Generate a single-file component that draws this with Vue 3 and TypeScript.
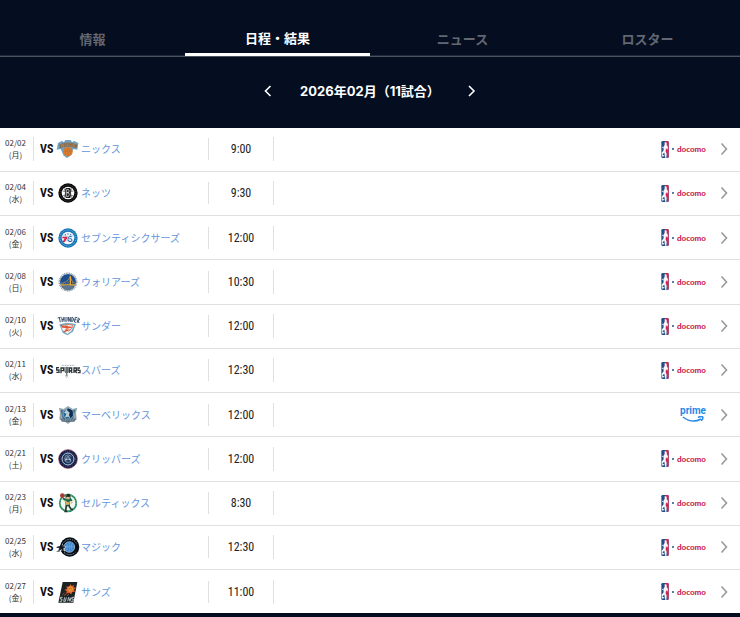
<script setup lang="ts">
import { ref } from 'vue'

type Team =
  | 'knicks' | 'nets' | 'sixers' | 'warriors' | 'thunder' | 'spurs'
  | 'mavericks' | 'clippers' | 'celtics' | 'magic' | 'suns'

interface Game {
  date: string
  day: string
  team: Team
  name: string
  time: string
  channel: 'docomo' | 'prime'
}

const tabs: string[] = ['情報', '日程・結果', 'ニュース', 'ロスター']
const activeTab = ref<string>('日程・結果')

const games: Game[] = [
  { date: '02/02', day: '月', team: 'knicks', name: 'ニックス', time: '9:00', channel: 'docomo' },
  { date: '02/04', day: '水', team: 'nets', name: 'ネッツ', time: '9:30', channel: 'docomo' },
  { date: '02/06', day: '金', team: 'sixers', name: 'セブンティシクサーズ', time: '12:00', channel: 'docomo' },
  { date: '02/08', day: '日', team: 'warriors', name: 'ウォリアーズ', time: '10:30', channel: 'docomo' },
  { date: '02/10', day: '火', team: 'thunder', name: 'サンダー', time: '12:00', channel: 'docomo' },
  { date: '02/11', day: '水', team: 'spurs', name: 'スパーズ', time: '12:30', channel: 'docomo' },
  { date: '02/13', day: '金', team: 'mavericks', name: 'マーベリックス', time: '12:00', channel: 'prime' },
  { date: '02/21', day: '土', team: 'clippers', name: 'クリッパーズ', time: '12:00', channel: 'docomo' },
  { date: '02/23', day: '月', team: 'celtics', name: 'セルティックス', time: '8:30', channel: 'docomo' },
  { date: '02/25', day: '水', team: 'magic', name: 'マジック', time: '12:30', channel: 'docomo' },
  { date: '02/27', day: '金', team: 'suns', name: 'サンズ', time: '11:00', channel: 'docomo' },
]
</script>

<template>
  <main class="page">
    <nav class="tabs">
      <a
        v-for="tab in tabs"
        :key="tab"
        href="#"
        class="tab"
        :class="{ active: tab === activeTab }"
        @click.prevent="activeTab = tab"
      >{{ tab }}</a>
    </nav>

    <header class="month">
      <button type="button" class="arrow">
        <svg viewBox="0 0 10 14" width="10" height="14"><path d="M7.500 2 2.500 7 7.500 12" /></svg>
      </button>
      <h1>2026年02月（11試合）</h1>
      <button type="button" class="arrow">
        <svg viewBox="0 0 10 14" width="10" height="14"><path d="M2 2 7 7 2 12" /></svg>
      </button>
    </header>

    <table class="games">
      <tbody>
        <tr v-for="game in games" :key="game.date">
          <td class="date-cell">
            <div class="date"><span>{{ game.date }}</span><span>({{ game.day }})</span></div>
          </td>
          <td class="team-cell">
            <div class="opponent">
              <b class="vs">VS</b>
              <svg class="logo" viewBox="0 0 78 66" width="26" height="22">
                <g v-if="game.team === 'knicks'">
                  <path d="M9 15 20 9l7 3 4-6h16l4 6 7-3 12 6-3 20-12-2-9 20-10 7-10-7-9-20-12 2z" fill="#6fa3c4" />
                  <path d="M11 20q28-13 56 0l-3 11q-25-11-50 0z" fill="#85694d" />
                  <path d="M14 20v9m6-11v10m0-10 6 9m0-11v10m6-11v10m5-10v10m9-10-5 5 6 6m4-10v10m10-8-7 1 5 6-6 2" stroke="#b98a5d" stroke-width="2" fill="none" />
                  <circle cx="39" cy="41" r="14" fill="#dd7b2c" />
                  <path d="M25 41q14-5 28 0M39 27v28M29 31q9 10 0 20m20-20q-9 10 0 20" stroke="#b56a30" stroke-width="1.500" fill="none" />
                </g>
                <g v-else-if="game.team === 'nets'">
                  <circle cx="39" cy="33" r="29" fill="#080808" />
                  <circle cx="39" cy="33" r="24" fill="none" stroke="#666" stroke-width="2" stroke-dasharray="3 3" />
                  <circle cx="39" cy="33" r="19" fill="#fff" />
                  <path d="M22 27q13 4 34 0M23 41q14-5 32 0M28 19q7 13 0 28m22-28q-7 13 0 28" stroke="#555" stroke-width="2" fill="none" />
                  <rect x="31" y="18" width="16" height="30" rx="4" fill="#111" />
                  <path d="M35 22h5q5 5 0 10h-5zm0 10h6q4 6-1 12h-5z" fill="none" stroke="#fff" stroke-width="2" />
                </g>
                <g v-else-if="game.team === 'sixers'">
                  <circle cx="39" cy="33" r="29" fill="#1675b8" />
                  <circle cx="39" cy="33" r="24" fill="none" stroke="#7fb6d8" stroke-width="3" stroke-dasharray="3 3" />
                  <circle cx="39" cy="33" r="19" fill="#f3f7fb" />
                  <path d="M22 26q18 5 34 0M25 44q15-7 28 0" stroke="#8fbfe0" stroke-width="2" fill="none" />
                  <path d="M22 29h15v5L28 46h-6l7-12h-7z" fill="#dc274c" />
                  <path d="M50 29h-7q-4 2-4 9 0 6 6 6t6-5-8-4" fill="none" stroke="#2464ac" stroke-width="3" />
                  <path d="m30 21 2 4m7-6v4m9-2-2 4" stroke="#2464ac" stroke-width="3" />
                </g>
                <g v-else-if="game.team === 'warriors'">
                  <circle cx="39" cy="33" r="24" fill="#1d4d8d" />
                  <circle cx="39" cy="33" r="26" fill="none" stroke="#8b9ba9" stroke-width="5" stroke-dasharray="3 2" />
                  <path d="M18 37q18-1 28-20 4 18 13 19" fill="none" stroke="#d9a53f" stroke-width="2" />
                  <path d="M17 42h44M46 15v36" stroke="#e7aa36" stroke-width="4" />
                  <path d="M25 37v8m7-10v10m7-15v15m14-13v13" stroke="#b08d4a" stroke-width="2" />
                  <path d="M20 47q19-8 38 0-9 11-19 11T20 47z" fill="#5c7690" />
                </g>
                <g v-else-if="game.team === 'thunder'">
                  <path d="M13 28 36 23l27 4-9 23-17 11-14-8z" fill="#78a9c2" />
                  <path d="m19 30 38 1-8 17-12 9-15-13z" fill="#f1f4f7" />
                  <path d="m16 29 40 8-24 5 14 2-21 9 9-13-12-2z" fill="#df563e" />
                  <path d="M25 37q14-14 28-6-3 14-13 18" fill="none" stroke="#e9794d" stroke-width="3" />
                  <path
                    d="M8 9 17 7M13 8 16 22M20 7 22 21M26 6 27 20M21 14 27 13M30 6V17Q33 22 36 17V6M40 20V6L46 20V6M50 20 51 6Q58 9 55 15 54 20 50 20M67 8 61 7 58 21 64 22M60 14 65 15M67 23 70 9Q76 11 73 15 71 17 69 16L72 24"
                    stroke="#3c526f"
                    stroke-width="3"
                    fill="none"
                  />
                </g>
                <g v-else-if="game.team === 'spurs'" fill="none" stroke="#303739" stroke-width="4">
                  <path d="M12 26H5v7h7v7H4M18 43V27h8v8h-8M43 42V27h7v8h-7m3 0 6 7M57 42V27h7v8h-7m3 0 5 7M75 27h-6v7h6v7h-7" />
                  <path d="M30 24v9q0 8 5 8t4-8v-9M35 23v27" stroke="#657073" />
                  <path d="m31 50 4-3 4 3-4 6z" stroke="#9aa4a6" stroke-width="2" />
                  <path d="M20 19h38" stroke="#9aa3a8" stroke-width="3" stroke-dasharray="3 2" />
                </g>
                <g v-else-if="game.team === 'mavericks'">
                  <path d="m12 11 14 4 13-9 14 9 14-4-4 15 2 20-13 4-13 10-14-10-12-4 2-19z" fill="#93a6b1" />
                  <path d="m17 17 11 3 11-8 11 8 11-3-4 15-3 14-15 9-15-9-4-14z" fill="#3f7090" />
                  <circle cx="40" cy="29" r="16" fill="#1d6497" stroke="#b5c5cd" stroke-width="2" />
                  <path d="M36 14 27 26l7 3-4 11 9-2 6 4-2-18z" fill="#b9cdd8" />
                  <path d="m38 13 15 8v15l-7 6-4-9 3-8-8-4z" fill="#132a49" />
                  <path d="M15 44h49l-6 9H21z" fill="#54697a" />
                  <path d="M20 48h38" stroke="#9fb1bb" stroke-width="3" stroke-dasharray="3 2" />
                </g>
                <g v-else-if="game.team === 'clippers'">
                  <circle cx="39" cy="33" r="28" fill="#101b45" stroke="#7b2945" stroke-width="2" />
                  <circle cx="39" cy="33" r="23" fill="none" stroke="#5f5478" stroke-width="3" stroke-dasharray="3 4" />
                  <circle cx="39" cy="33" r="18" fill="#1d345d" stroke="#b8cbd9" stroke-width="3" />
                  <path d="M49 25q-10-7-17-2-6 9 0 18 8 5 17-1" fill="none" stroke="#9fb4c6" stroke-width="2" />
                  <path d="m29 38 4-9 6-7 6 7 4 9q-10-4-20 0z" fill="#b8cbda" />
                  <path d="M39 22v14m-6-6h12" stroke="#18264c" stroke-width="2" />
                </g>
                <g v-else-if="game.team === 'celtics'">
                  <circle cx="39" cy="33" r="25" fill="#f0f5ee" stroke="#16845a" stroke-width="5" />
                  <circle cx="39" cy="33" r="25" fill="none" stroke="#a9cbb5" stroke-width="2" stroke-dasharray="3 4" />
                  <path d="m31 16 4-5h9l3 6 6 9-8 2v13l-12 3-3-17-8-6 3-4 9 3z" fill="#176b4c" />
                  <path d="M34 14h10v8H34zM30 25l6 4-2 4-7-6zM47 27l7 4-7 6z" fill="#ddb990" />
                  <path d="M31 13h16M36 7h8v5h-8z" stroke="#34382c" stroke-width="3" />
                  <path d="m33 28 6 3 6-3-2 10H33z" fill="#d4b35b" />
                  <path d="m34 40-2 16m9-16 8 13m-21 5h8m12-6h6" stroke="#203a32" stroke-width="5" />
                  <circle cx="22" cy="11" r="7" fill="#b6403a" />
                  <path d="M16 10q7-4 12 2m-7-7v13" stroke="#743729" fill="none" />
                </g>
                <g v-else-if="game.team === 'magic'">
                  <circle cx="44" cy="33" r="29" fill="#050c16" />
                  <path d="M26 20q6-9 18-10 13 0 20 12" fill="none" stroke="#859aa8" stroke-width="3" stroke-dasharray="4 3" />
                  <path d="M27 49q17 14 34 0" fill="none" stroke="#a9b9c6" stroke-width="3" stroke-dasharray="3 3" />
                  <circle cx="43" cy="33" r="16" fill="#3c85cf" stroke="#b9d0e1" stroke-width="2" />
                  <path d="M28 33q15-5 30 0M43 18v31M34 21q9 11 0 23m18-23q-8 12 0 23" stroke="#79acdc" stroke-width="2" fill="none" />
                  <path d="m22 22 4 9 9 1-7 6 3 9-9-5-9 5 2-9-10-4 10-2z" fill="#d5dfe6" />
                  <path d="m20 24 4 8 6 1-6 4 1 7-6-5-8 5 3-9-9-1 10-3zM5 46h9" fill="#111820" stroke="#111820" stroke-width="2" />
                </g>
                <g v-else>
                  <path d="M23 3h44L55 65H10z" fill="#192324" />
                  <path d="m47 9 3 7 7-5-2 8 8 1-6 6 3 6-8 1-3 7-7-5-8 3 1-8-7-3 8-4-2-7 8 1z" fill="#e75e2c" />
                  <circle cx="46" cy="24" r="8" fill="#f1a43c" />
                  <path d="M38 24q8-4 16 0m-8-8v16m-6-14q7 6 0 12m12-12q-7 6 0 12" stroke="#ad4925" fill="none" />
                  <path d="m29 35-8 8m15-6-9 7m15-6-6 7" stroke="#9c4831" stroke-width="3" />
                  <path d="M23 49h-6l-1 5h5l-1 7h-6M29 49l-3 12h5l3-12M38 61l3-12 4 12 3-12M57 49h-6l-1 5h5l-1 7h-6" stroke="#b8c2c4" stroke-width="3" fill="none" />
                </g>
              </svg>
              <a href="#" class="name">{{ game.name }}</a>
            </div>
          </td>
          <td class="time-cell"><div class="time">{{ game.time }}</div></td>
          <td class="channel-cell">
            <div class="channel">
              <span v-if="game.channel === 'docomo'" class="docomo">
                <svg viewBox="0 0 24 51" width="8" height="17">
                  <rect x="1" width="22" height="51" rx="4" fill="#244e87" />
                  <path d="M13 0h6q4 0 4 4v43q0 4-4 4h-1l-3-21-5-9z" fill="#d6244b" />
                  <path d="m11 3 6 2v7l4 7-2 7-4-4-1 9 3 7-1 13h-3l-3-16-5 4 1 8-3-1-1-11 6-7-1-10 4-6z" fill="#f5f8fb" />
                  <path d="M4 44h6" stroke="#dce7f1" stroke-width="4" />
                  <circle cx="5" cy="19" r="2" fill="#e8f0f5" />
                </svg>
                <i class="dot"></i>
                <span>docomo</span>
              </span>
              <span v-else class="prime">
                <span>prime</span>
                <svg viewBox="0 0 24 7" width="24" height="7">
                  <path d="M2 1q9 7 18 2M17 1.500q4-2 5 0 0 2-2 3" fill="none" stroke="#2789e8" stroke-width="1.500" />
                </svg>
              </span>
              <a href="#" class="detail" :aria-label="game.name">
                <svg viewBox="0 0 8 14" width="8" height="14"><path d="m1.500 1.500 5 5.500-5 5.500" /></svg>
              </a>
            </div>
          </td>
        </tr>
      </tbody>
    </table>
  </main>
</template>

<style>
body {
  margin: 0;
  background: #050e20;
}
</style>

<style scoped>
.page {
  display: flex;
  flex-direction: column;
  min-height: 100vh;
  box-sizing: border-box;
  padding-bottom: 4px;
  background: #050e20;
  font-family: "Noto Sans CJK JP", sans-serif;
}

.tabs {
  display: grid;
  grid-template-columns: repeat(4, 1fr);
  padding-top: 22px;
  border-bottom: 1px solid #4b515e;
}

.tab {
  display: flex;
  align-items: center;
  justify-content: center;
  box-sizing: border-box;
  height: 34px;
  border-bottom: 1px solid #202938;
  color: #626773;
  font-size: 13px;
  font-weight: 700;
  line-height: 20px;
  text-decoration: none;
}

.tab.active {
  border-bottom: 3px solid #fff;
  color: #fff;
}

.month {
  display: flex;
  align-items: center;
  justify-content: center;
  gap: 24px;
  padding: 24px 0 27px;
  color: #fff;
}

.month h1 {
  margin: 0;
  font-family: Inter, "Noto Sans CJK JP", sans-serif;
  font-size: 13px;
  font-weight: 700;
  line-height: 20px;
}

.arrow {
  display: flex;
  padding: 3px;
  border: 0;
  background: none;
  color: inherit;
}

.arrow path,
.detail path {
  fill: none;
  stroke: currentColor;
  stroke-width: 1.6;
}

.games {
  flex: 1;
  width: 100%;
  border-collapse: collapse;
  background: #fff;
}

td {
  padding: 0;
  vertical-align: middle;
}

tr + tr td {
  border-top: 1px solid #e0e0e0;
}

.date-cell {
  width: 34px;
}

.team-cell {
  width: 175px;
}

.time-cell {
  width: 65px;
}

.date {
  display: flex;
  flex-direction: column;
  align-items: center;
  padding-right: 2px;
  border-right: 1px solid #e0e0e0;
  color: #333;
  font-size: 8px;
  line-height: 12px;
}

.opponent {
  display: flex;
  align-items: center;
  height: 22px;
  padding-left: 6px;
  border-right: 1px solid #e0e0e0;
}

.vs {
  width: 15px;
  color: #111;
  font-family: "Roboto Condensed", "Liberation Sans Narrow", Roboto, sans-serif;
  font-size: 12px;
  line-height: 16px;
}

.logo {
  flex: none;
}

.name {
  color: #6495dc;
  font-size: 10px;
  line-height: 16px;
  text-decoration: none;
  white-space: nowrap;
}

.time {
  border-right: 1px solid #e0e0e0;
  color: #222;
  font-family: "Roboto Condensed", "Liberation Sans Narrow", Roboto, sans-serif;
  font-size: 12px;
  line-height: 24px;
  text-align: center;
}

.channel {
  display: flex;
  align-items: center;
  justify-content: flex-end;
  gap: 14px;
  padding-right: 12px;
}

.docomo {
  display: flex;
  align-items: center;
  gap: 3px;
  color: #c91f4b;
  font-family: Lato, sans-serif;
  font-size: 8px;
  font-weight: 900;
  line-height: 16px;
}

.dot {
  width: 2px;
  height: 2px;
  border-radius: 50%;
  background: #244e87;
}

.prime {
  display: flex;
  flex-direction: column;
  align-items: center;
  color: #2789e8;
  font-family: Roboto, sans-serif;
  font-size: 10px;
  font-weight: 700;
  line-height: 10px;
}

.detail {
  display: flex;
  color: #999;
}
</style>
